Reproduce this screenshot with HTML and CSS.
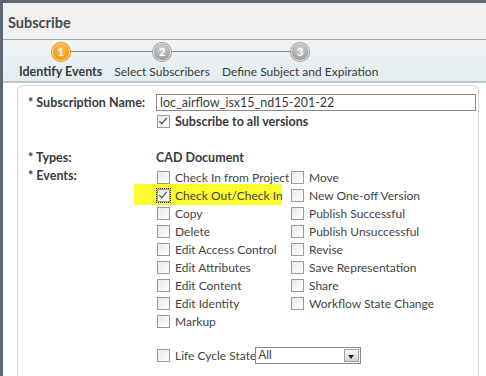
FILE: index.html
```html
<!DOCTYPE html>
<html lang="en">
<head>
    <meta charset="UTF-8">
    <title>Subscribe</title>
    <link rel="stylesheet" href="styles.css">
</head>
<body>
    <div class="window">
        <div class="titlebar">Subscribe</div>

        <div class="steps">
            <div class="step current">
                <span class="dot">1</span>
                <span class="step-label">Identify Events</span>
            </div>
            <div class="step">
                <span class="dot">2</span>
                <span class="step-label">Select Subscribers</span>
            </div>
            <div class="step">
                <span class="dot">3</span>
                <span class="step-label">Define Subject and Expiration</span>
            </div>
        </div>

        <div class="panel">
            <div class="form">
                <div class="label">* Subscription Name:</div>
                <div class="field">
                    <div class="textbox">loc_airflow_isx15_nd15-201-22</div>
                </div>

                <div></div>
                <div class="check bold"><span class="box checked"></span>Subscribe to all versions</div>

                <div class="label types">* Types:</div>
                <div class="value types">CAD Document</div>

                <div class="label">* Events:</div>
                <div class="events">
                    <div class="col">
                        <div class="check"><span class="box"></span>Check In from Project</div>
                        <div class="check marked"><span class="marker"></span><span class="box checked focus"></span>Check Out/Check In</div>
                        <div class="check"><span class="box"></span>Copy</div>
                        <div class="check"><span class="box"></span>Delete</div>
                        <div class="check"><span class="box"></span>Edit Access Control</div>
                        <div class="check"><span class="box"></span>Edit Attributes</div>
                        <div class="check"><span class="box"></span>Edit Content</div>
                        <div class="check"><span class="box"></span>Edit Identity</div>
                        <div class="check"><span class="box"></span>Markup</div>
                    </div>
                    <div class="col">
                        <div class="check"><span class="box"></span>Move</div>
                        <div class="check"><span class="box"></span>New One-off Version</div>
                        <div class="check"><span class="box"></span>Publish Successful</div>
                        <div class="check"><span class="box"></span>Publish Unsuccessful</div>
                        <div class="check"><span class="box"></span>Revise</div>
                        <div class="check"><span class="box"></span>Save Representation</div>
                        <div class="check"><span class="box"></span>Share</div>
                        <div class="check"><span class="box"></span>Workflow State Change</div>
                    </div>
                </div>

                <div></div>
                <div class="check lifecycle">
                    <span class="box"></span>Life Cycle State<span class="select"><span class="select-value">All</span><span class="select-btn"></span></span>
                </div>
            </div>
        </div>
    </div>
</body>
</html>
```

FILE: styles.css
```css
body {
    margin: 0;
    font-family: Lato, "Open Sans", sans-serif;
    font-size: 12px;
    color: #3c3c3c;
    background: #fff;
}
.window {
    height: 376px;
    border-top: 3px solid #5d6772;
    border-left: 3px solid #5d6772;
    background: #fff;
    overflow: hidden;
}
.titlebar {
    height: 36px;
    line-height: 40px;
    padding-left: 5px;
    background: #f0f0f0;
    border-bottom: 1px solid #a9a9a9;
    font-size: 14.5px;
    font-weight: bold;
    color: #4b4b4b;
}
.steps {
    display: flex;
    gap: 12px;
    height: 41px;
    padding-left: 16px;
    background: linear-gradient(#eef3f6, #e4ecf1);
    border-bottom: 2px solid #bcc7ce;
}
.step {
    position: relative;
    display: flex;
    flex-direction: column;
    align-items: center;
}
.step::before,
.step::after {
    content: "";
    position: absolute;
    top: 11px;
    height: 1px;
    background: #8c8c8c;
}
.step::before {
    left: -6px;
    right: 50%;
}
.step::after {
    left: 50%;
    right: -6px;
}
.step:first-child::before,
.step:last-child::after {
    display: none;
}
.dot {
    position: relative;
    z-index: 1;
    width: 16px;
    height: 16px;
    margin-top: 3px;
    border-radius: 50%;
    border: 1px solid #d8d8d8;
    box-shadow: 0 0 0 1px #9a9a9a;
    background: radial-gradient(circle at 50% 30%, #d4d4d4, #8e8e8e);
    color: #fff;
    font-size: 11px;
    font-weight: bold;
    line-height: 16px;
    text-align: center;
}
.current .dot {
    border-color: #ffd27a;
    box-shadow: 0 0 0 1px #e08a00;
    background: radial-gradient(circle at 50% 30%, #ffc24a, #f28c00);
}
.step-label {
    margin-top: 3px;
    white-space: nowrap;
    font-size: 12px;
    color: #3a3a3a;
}
.current .step-label {
    font-weight: bold;
    font-size: 12.5px;
}
.panel {
    margin: 2px 7px 0 14px;
    height: 300px;
    padding: 8px 0 0 10px;
    border: 1px solid #d6d6d6;
    border-bottom: none;
    border-radius: 6px 6px 0 0;
}
.form {
    display: grid;
    grid-template-columns: 128px 1fr;
    align-items: start;
}
.label {
    font-weight: bold;
    font-size: 12.5px;
    line-height: 18px;
    color: #3a3a3a;
}
.field {
    padding-right: 2px;
}
.textbox {
    height: 15px;
    line-height: 15px;
    padding-left: 3px;
    border: 1px solid #8a8a8a;
    font-size: 12.5px;
    color: #3a3a3a;
}
.check {
    position: relative;
    display: flex;
    align-items: center;
    height: 18px;
    white-space: nowrap;
    color: #444;
}
.bold {
    font-weight: bold;
    font-size: 12.5px;
    color: #3a3a3a;
}
.box {
    position: relative;
    width: 11px;
    height: 11px;
    margin: 0 5px 0 1px;
    border: 1px solid #9a9a9a;
    background: linear-gradient(135deg, #e8e8e8, #fff);
    flex-shrink: 0;
}
.box.checked::after {
    content: "";
    position: absolute;
    left: 3px;
    top: 0;
    width: 3px;
    height: 7px;
    border-right: 1.5px solid #333;
    border-bottom: 1.5px solid #333;
    transform: rotate(40deg);
}
.box.focus {
    outline: 1px dotted #222;
    outline-offset: 0;
}
.types {
    margin-top: 19px;
    line-height: 18px;
}
.value {
    font-weight: bold;
    font-size: 12.5px;
    color: #3a3a3a;
}
.events {
    display: flex;
    margin-top: 1px;
}
.col:first-child {
    width: 134px;
}
.check.marked {
    z-index: 0;
}
.marker {
    position: absolute;
    z-index: -1;
    left: -22px;
    top: -2px;
    width: 148px;
    height: 21px;
    background: #fbfb2e;
}
.lifecycle {
    margin-top: 16px;
}
.select {
    display: flex;
    width: 104px;
    height: 15px;
    margin-left: -1px;
    border: 1px solid #8a8a8a;
    color: #3a3a3a;
    font-family: "Liberation Sans", Arial, sans-serif;
}
.select-value {
    flex: 1;
    padding-left: 2px;
    line-height: 15px;
}
.select-btn {
    position: relative;
    width: 13px;
    margin: 1px;
    border: 1px solid #a0a0a0;
    background: linear-gradient(#f4f4f4, #d4d4d4);
}
.select-btn::after {
    content: "";
    position: absolute;
    left: 3px;
    top: 5px;
    border-left: 3px solid transparent;
    border-right: 3px solid transparent;
    border-top: 4px solid #222;
}
```
